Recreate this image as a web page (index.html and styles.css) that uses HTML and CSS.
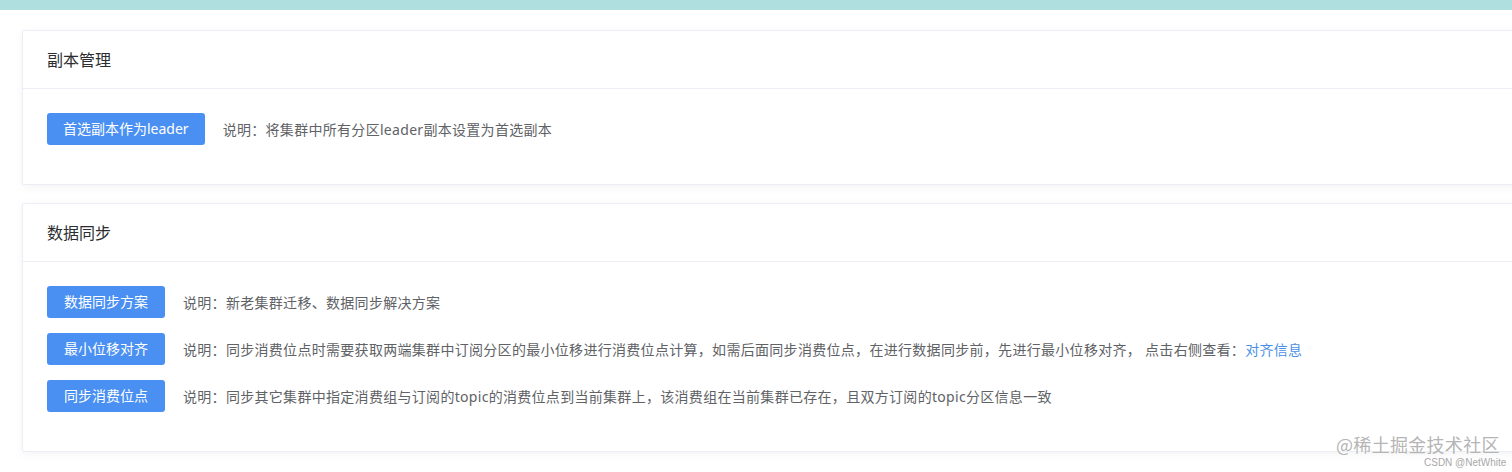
FILE: index.html
```html
<!DOCTYPE html>
<html lang="zh-CN">
<head>
<meta charset="utf-8">
<title>副本管理</title>
<link rel="stylesheet" href="styles.css">
</head>
<body>
<div class="topbar"></div>
<main class="page">
  <section class="card">
    <div class="card-header">副本管理</div>
    <div class="card-body">
      <div class="row">
        <button class="btn btn-wide">首选副本作为leader</button>
        <span class="desc">说明：将集群中所有分区leader副本设置为首选副本</span>
      </div>
    </div>
  </section>
  <section class="card">
    <div class="card-header">数据同步</div>
    <div class="card-body">
      <div class="row">
        <button class="btn">数据同步方案</button>
        <span class="desc">说明：新老集群迁移、数据同步解决方案</span>
      </div>
      <div class="row">
        <button class="btn">最小位移对齐</button>
        <span class="desc">说明：同步消费位点时需要获取两端集群中订阅分区的最小位移进行消费位点计算，如需后面同步消费位点，在进行数据同步前，先进行最小位移对齐，&nbsp;点击右侧查看：<a class="link" href="#">对齐信息</a></span>
      </div>
      <div class="row">
        <button class="btn">同步消费位点</button>
        <span class="desc">说明：同步其它集群中指定消费组与订阅的topic的消费位点到当前集群上，该消费组在当前集群已存在，且双方订阅的topic分区信息一致</span>
      </div>
    </div>
  </section>
</main>
<div class="watermark">@稀土掘金技术社区</div>
<div class="csdn">CSDN @NetWhite</div>
</body>
</html>
```
FILE: styles.css
```css
html, body {
  margin: 0;
  padding: 0;
  overflow: hidden;
  background: #fff;
  height: 472px;
}
body {
  font-family: "Noto Sans", "Noto Sans CJK SC", sans-serif;
  font-size: 14px;
  color: #606266;
  position: relative;
}
.topbar {
  height: 10px;
  background: #b0dfe0;
}
.page {
  padding: 20px 0 0 22px;
  margin-right: -40px;
  display: flex;
  flex-direction: column;
  gap: 18px;
}
.card {
  border: 1px solid #ebeef5;
  border-radius: 2px;
  background: #fff;
  box-shadow: 0 2px 10px 0 rgba(0, 0, 0, 0.05);
}
.card-header {
  height: 57px;
  line-height: 57px;
  padding-left: 24px;
  border-bottom: 1px solid #ebeef5;
  font-family: "Noto Sans CJK SC", sans-serif;
  font-size: 16px;
  font-weight: 400;
  color: #2b2d30;
}
.card-body {
  padding: 24px 24px 24px 24px;
}
.row {
  display: flex;
  align-items: center;
  gap: 18px;
  margin-bottom: 15px;
}
.btn {
  height: 32px;
  padding: 0 17px;
  border: none;
  border-radius: 3px;
  background: #4a90f2;
  color: #fff;
  font-family: "Noto Sans", "Noto Sans CJK SC", sans-serif;
  font-size: 14px;
  line-height: 32px;
  white-space: nowrap;
}
.btn-wide {
  padding: 0 16px;
}
.desc {
  font-family: "Noto Sans", "Noto Sans CJK SC", sans-serif;
  white-space: nowrap;
  letter-spacing: 0.3px;
  color: #606266;
}
.link {
  color: #4a90e8;
  text-decoration: none;
}
.watermark {
  position: absolute;
  left: 1336px;
  top: 431px;
  font-family: "Noto Sans CJK SC", sans-serif;
  font-size: 18px;
  letter-spacing: 0.3px;
  color: #b5b5b5;
  text-shadow: 0 0 1px #fff;
}
.csdn {
  position: absolute;
  left: 1424px;
  top: 457px;
  font-family: "Liberation Sans", sans-serif;
  font-size: 10px;
  color: #a8a8a8;
}
```
